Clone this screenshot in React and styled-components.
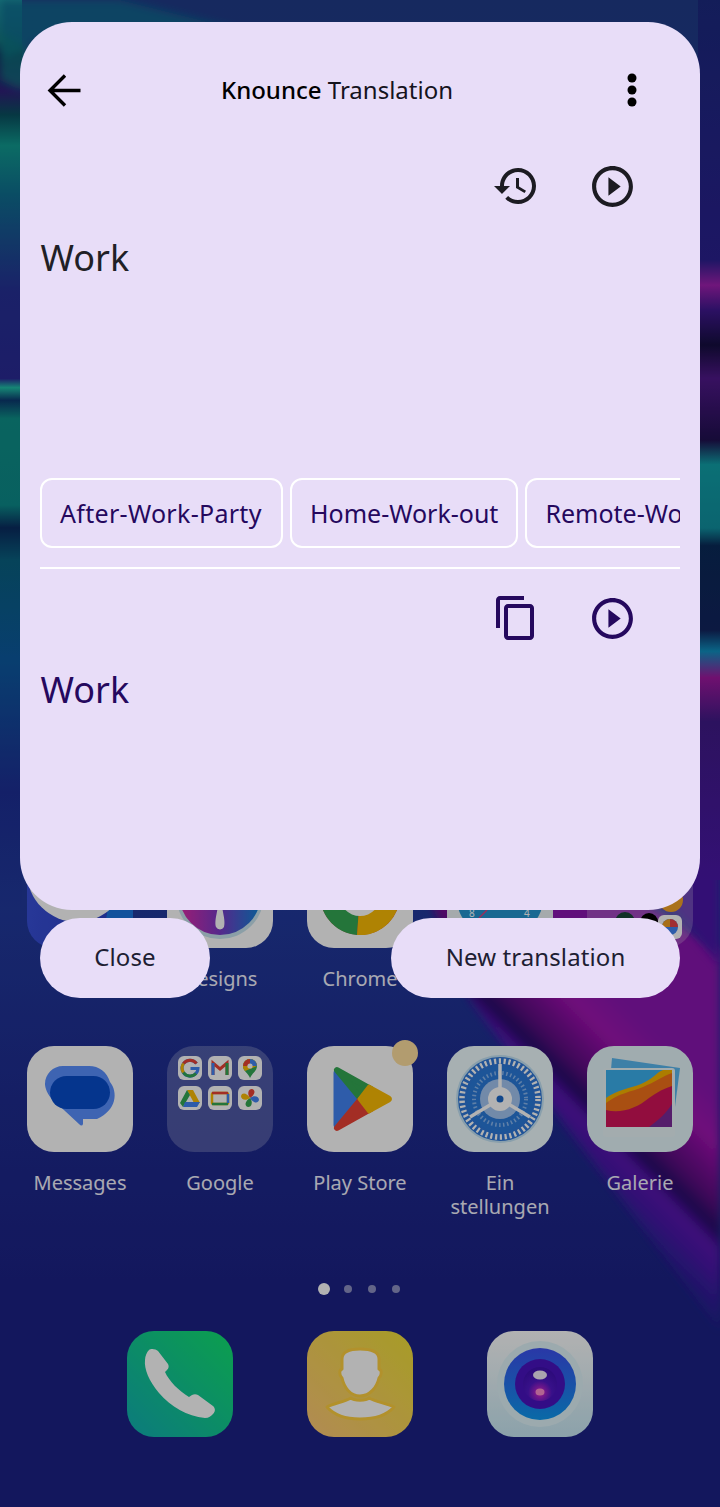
import React from "react";
import styled, { createGlobalStyle } from "styled-components";

const Global = createGlobalStyle`
  html, body { margin: 0; padding: 0; background: #14195e; }
  * { box-sizing: border-box; }
  body { font-family: "Noto Sans", "Open Sans", sans-serif; }
`;

const Screen = styled.div`
  position: relative; width: 720px; height: 1507px; overflow: hidden; background: #1c2286;
`;
const WallpaperArt = styled.svg`
  position: absolute; inset: 0; width: 720px; height: 1507px; display: block;
`;
const Home = styled.main`
  position: relative; padding-top: 842px;
`;
const AppGrid = styled.div`
  display: grid; grid-template-columns: repeat(5, 140px); row-gap: 55px; margin-left: 10px;
`;
const AppCell = styled.div`
  display: flex; flex-direction: column; align-items: center;
`;
const AppIcon = styled.div`
  position: relative; width: 106px; height: 106px; border-radius: 27px;
  background: ${p => p.$bg || "#fff"};
  svg { display: block; width: 106px; height: 106px; border-radius: 27px; }
`;
const Badge = styled.span`
  position: absolute; top: -6px; right: -5px; width: 26px; height: 26px; border-radius: 50%;
  background: #ffe0a0;
`;
const AppLabel = styled.div`
  margin-top: 19px; width: 130px; min-height: 24px; text-align: center; font-size: 20px; line-height: 24px;
  color: #f2f2ff;
`;
const Dots = styled.div`
  display: flex; justify-content: center; align-items: center; gap: 16px;
  height: 12px; margin-top: 64px; padding-right: 2px;
`;
const Dot = styled.span`
  width: ${p => (p.$on ? 12 : 8)}px; height: ${p => (p.$on ? 12 : 8)}px; border-radius: 50%;
  margin-right: ${p => (p.$on ? -2 : 0)}px;
  background: ${p => (p.$on ? "#fff" : "rgba(255,255,255,.5)")};
`;
const Dock = styled.div`
  display: flex; justify-content: center; gap: 74px; margin-top: 36px;
`;
const Scrim = styled.div`
  position: absolute; inset: 0; background: rgba(0,0,0,.3);
`;
const Overlay = styled.div`
  position: absolute; top: 22px; left: 20px; width: 680px;
  display: flex; flex-direction: column; gap: 8px;
`;
const Panel = styled.section`
  height: 888px; border-radius: 52px; background: #e8ddf8; padding: 44px 20px 0;
`;
const Header = styled.header`
  display: flex; align-items: center; height: 48px; padding-right: 24px;
`;
const IconButton = styled.button`
  width: 48px; height: 48px; padding: 0; border: 0; background: none; flex: none;
  color: ${p => p.$color || "#000"};
  display: flex; align-items: center; justify-content: center;
  svg { display: block; flex: none; fill: currentColor; }
`;
const Title = styled.h1`
  flex: 1; margin: 0; padding: 0 22px 0 0; text-align: center;
  font-size: 24px; line-height: 32px; font-weight: 400; color: #15131d;
  strong { font-weight: 500; color: #000; }
`;
const Toolbar = styled.div`
  display: flex; justify-content: flex-end; gap: 48px; padding-right: 44px;
  margin-top: ${p => p.$top}px;
`;
const BigText = styled.p`
  margin: 24px 0 0 .5px; font-size: 36px; line-height: 48px; height: ${p => p.$h}px;
  color: ${p => p.$color};
`;
const Chips = styled.div`
  display: flex; gap: 7px; overflow: hidden; width: 640px;
`;
const Chip = styled.div`
  flex: none; height: 70px; padding: 0 18px; border: 2px solid #fff; border-radius: 12px;
  min-width: ${p => p.$min || 0}px;
  display: flex; align-items: center;
  font-size: 25px; color: #25085e; white-space: nowrap;
  letter-spacing: ${p => p.$track || 0}px;
`;
const Divider = styled.hr`
  margin: 19px 0 0; border: 0; height: 2px; background: #fff;
`;
const Actions = styled.div`
  display: flex; justify-content: space-between; padding: 0 20px;
`;
const PillButton = styled.button`
  height: 80px; width: ${p => p.$w}px; padding: 0 0 4px; border: 0; border-radius: 40px; background: #e8ddf8;
  font: 400 24px "Noto Sans", sans-serif; letter-spacing: .1px; color: #201d33;
`;

const W = ({ children, ...p }) => <svg viewBox="0 0 106 106" {...p}>{children}</svg>;

const Wallpaper = () => (
  <WallpaperArt viewBox="0 0 720 1507">
    <defs>
      <linearGradient id="base" x1="0" y1="0" x2="0" y2="1507" gradientUnits="userSpaceOnUse">
        <stop offset="0" stopColor="#203c89" />
        <stop offset=".6" stopColor="#213a9d" />
        <stop offset=".73" stopColor="#1f2c90" />
        <stop offset=".85" stopColor="#1c2286" />
        <stop offset="1" stopColor="#1c2286" />
      </linearGradient>
      <linearGradient id="left" x1="0" y1="0" x2="0" y2="1">
        <stop offset="0" stopColor="#18a0a8" />
        <stop offset=".044" stopColor="#0f7a80" />
        <stop offset=".06" stopColor="#0a2c5e" />
        <stop offset=".1" stopColor="#30207a" />
        <stop offset=".126" stopColor="#0a5060" />
        <stop offset=".16" stopColor="#109a90" />
        <stop offset=".214" stopColor="#0f6e90" />
        <stop offset=".32" stopColor="#263096" />
        <stop offset=".416" stopColor="#2a2a96" />
        <stop offset=".426" stopColor="#20c0a8" />
        <stop offset=".44" stopColor="#0c3a70" />
        <stop offset=".46" stopColor="#0e9088" />
        <stop offset=".555" stopColor="#0c8a8a" />
        <stop offset=".58" stopColor="#0a2c60" />
        <stop offset=".615" stopColor="#0a6080" />
        <stop offset=".725" stopColor="#0c5aa0" />
        <stop offset=".87" stopColor="#1e2f96" />
        <stop offset="1" stopColor="#213a9d" />
      </linearGradient>
      <linearGradient id="right" x1="0" y1="0" x2="0" y2="1">
        <stop offset="0" stopColor="#1c2a80" />
        <stop offset=".295" stopColor="#2a2090" />
        <stop offset=".324" stopColor="#a020b0" />
        <stop offset=".352" stopColor="#401890" />
        <stop offset=".392" stopColor="#150e40" />
        <stop offset=".43" stopColor="#50188a" />
        <stop offset=".5" stopColor="#201050" />
        <stop offset=".528" stopColor="#10a0a8" />
        <stop offset=".6" stopColor="#1090a0" />
        <stop offset=".62" stopColor="#0a2a58" />
        <stop offset=".716" stopColor="#12245e" />
        <stop offset=".74" stopColor="#0f90c0" />
        <stop offset=".77" stopColor="#a018a0" />
        <stop offset=".82" stopColor="#401a88" />
        <stop offset="1" stopColor="#4a18a8" />
      </linearGradient>
      <linearGradient id="band" x1="520" y1="1140" x2="640" y2="1020" gradientUnits="userSpaceOnUse">
        <stop offset="0" stopColor="#3a1aa8" stopOpacity="0" />
        <stop offset=".25" stopColor="#4a18a8" />
        <stop offset=".36" stopColor="#5a14b0" />
        <stop offset=".44" stopColor="#240c68" />
        <stop offset=".55" stopColor="#5a0f80" />
        <stop offset=".8" stopColor="#a012b0" />
        <stop offset="1" stopColor="#8a18b0" />
      </linearGradient>
      <filter id="soft" x="-10%" y="-10%" width="120%" height="120%"><feGaussianBlur stdDeviation="4" /></filter>
    </defs>
    <rect width="720" height="1507" fill="url(#base)" />
    <path d="M430 900L640 900L720 950V1330L470 1000Z" fill="url(#band)" filter="url(#soft)" />
    <path d="M630 860H720V965Z" fill="#4a18a8" filter="url(#soft)" />
    <rect x="0" y="0" width="22" height="910" fill="url(#left)" />
    <rect x="698" y="0" width="22" height="880" fill="url(#right)" />
    <g filter="url(#soft)">
      <path d="M0 0H120L240 30H60L0 60Z" fill="#0e6a90" opacity=".8" />
      <path d="M0 30L60 70L20 90L0 80Z" fill="#0f7a80" opacity=".7" />
    </g>
  </WallpaperArt>
);

const MessagesIcon = () => (
  <W>
    <path d="M36 20H62C72 20 80 26 83 36C91 46 90 64 70 73H56V78Q55 81 52 78L24 52C19 46 18 40 18 38C18 28 26 20 36 20Z" fill="#5a90ff" />
    <rect x="23" y="30" width="60" height="33" rx="16.5" fill="#084dcb" />
  </W>
);

const Tile = ({ x, y, children }) => (
  <g transform={`translate(${x} ${y})`}>
    <rect width="24" height="24" rx="6" fill="#fff" />
    {children}
  </g>
);

const GoogleFolder = () => (
  <W>
    <Tile x={11} y={10}>
      <path d="M18.5 7.5A8 8 0 1 0 20 12.5H12.5" fill="none" stroke="#4285f4" strokeWidth="3" />
      <path d="M18.5 7.5A8 8 0 0 0 5.5 7.5" fill="none" stroke="#ea4335" strokeWidth="3" />
      <path d="M5.5 7.5A8 8 0 0 0 5.5 16.500" fill="none" stroke="#fbbc05" strokeWidth="3" />
      <path d="M5.500 16.500A8 8 0 0 0 18 17.500" fill="none" stroke="#34a853" strokeWidth="3" />
    </Tile>
    <Tile x={41} y={10}>
      <path d="M5 19V7L12 13L19 7V19" fill="none" stroke="#ea4335" strokeWidth="3" />
      <path d="M5 19V7" stroke="#4285f4" strokeWidth="3" />
      <path d="M19 19V7" stroke="#34a853" strokeWidth="3" />
    </Tile>
    <Tile x={71} y={10}>
      <path d="M12 3A7 7 0 0 1 19 10C19 15 14 17 12 22C10 17 5 15 5 10A7 7 0 0 1 12 3Z" fill="#34a853" />
      <path d="M12 3A7 7 0 0 1 19 10L7 15C5 13 5 11 5 10A7 7 0 0 1 12 3Z" fill="#fbbc05" />
      <path d="M12 3A7 7 0 0 1 19 10H12Z" fill="#4285f4" />
      <path d="M12 3A7 7 0 0 0 5 10H12Z" fill="#ea4335" />
      <circle cx="12" cy="10" r="2.600" fill="#fff" />
    </Tile>
    <Tile x={11} y={40}>
      <path d="M9 4H15L22 17H16Z" fill="#fbbc05" />
      <path d="M9 4L2 17L5 21L12 9Z" fill="#34a853" />
      <path d="M7 16H22L19 21H5Z" fill="#4285f4" />
    </Tile>
    <Tile x={41} y={40}>
      <rect x="4" y="7" width="16" height="11" rx="1.500" fill="none" stroke="#fbbc05" strokeWidth="2.500" />
      <path d="M4 7H20" stroke="#ea4335" strokeWidth="2.500" />
      <path d="M4 18H20" stroke="#34a853" strokeWidth="2.500" />
      <path d="M20 8V17" stroke="#4285f4" strokeWidth="2.500" />
    </Tile>
    <Tile x={71} y={40}>
      <path d="M12 12C9 8 10 3 14 3C18 4 17 9 12 12Z" fill="#ea4335" />
      <path d="M12 12C16 9 21 10 21 14C20 18 15 17 12 12Z" fill="#4285f4" />
      <path d="M12 12C15 16 14 21 10 21C6 20 7 15 12 12Z" fill="#34a853" />
      <path d="M12 12C8 15 3 14 3 10C4 6 9 7 12 12Z" fill="#fbbc05" />
    </Tile>
  </W>
);

const PlayIcon = () => (
  <W>
    <path d="M30 27L56 53L30 79Z" fill="#4285f4" stroke="#4285f4" strokeWidth="7" strokeLinejoin="round" />
    <path d="M30 24L64 43L54 53Z" fill="#34a853" stroke="#34a853" strokeWidth="6" strokeLinejoin="round" />
    <path d="M30 82L64 63L54 53Z" fill="#ea4335" stroke="#ea4335" strokeWidth="6" strokeLinejoin="round" />
    <path d="M62 40L82 51Q85 53 82 55L62 66L52 53Z" fill="#fbbc05" stroke="#fbbc05" strokeWidth="3" strokeLinejoin="round" />
  </W>
);

const SettingsIcon = () => (
  <W>
    <circle cx="53" cy="53" r="44" fill="#c4e4f6" />
    <circle cx="53" cy="53" r="42" fill="#2f78d8" />
    <circle cx="53" cy="53" r="38" fill="none" stroke="#fff" strokeWidth="5.500" strokeDasharray="2.200 2.600" />
    <circle cx="53" cy="53" r="33.500" fill="#2a7ada" />
    <circle cx="53" cy="53" r="26" fill="none" stroke="#8ab8f0" strokeWidth="4" strokeDasharray="1.500 2.500" />
    <circle cx="53" cy="53" r="20" fill="#a4c6f2" />
    <g stroke="#fff" strokeWidth="3.500">
      <path d="M53 53V18" />
      <path d="M53 53L23 71" />
      <path d="M53 53L83 71" />
    </g>
    <circle cx="53" cy="53" r="12" fill="#fff" />
    <circle cx="53" cy="53" r="3.500" fill="#1b66c8" />
  </W>
);

const GalleryIcon = () => (
  <W>
    <path d="M25 12L93 22L85 84L20 70Z" fill="#5ab8f0" />
    <rect x="16" y="22" width="72" height="69" rx="3" fill="#eaf6fa" />
    <rect x="19" y="24" width="66" height="57" fill="#3cb0ee" />
    <path d="M19 52C30 44 44 42 54 38C66 33 70 26 76 24H85V81H19Z" fill="#f7b400" />
    <path d="M19 57C32 47 44 46 56 41C68 36 76 30 85 27V81H19Z" fill="#f2721a" />
    <path d="M19 64C34 68 50 62 62 52C70 46 78 42 85 40V81H19Z" fill="#d1145a" />
    <path d="M62 81C72 74 80 66 85 58V81Z" fill="#7a2a9a" />
  </W>
);

const PhoneIcon = () => (
  <W>
    <path d="M22 19C24 17 29 18 31 20L41 33C42 35 42 37 40 39L38 41C42 50 52 60 62 66L65 64C67 63 69 63 71 64L86 75C89 78 88 81 86 83C84 85 82 87 78 87C60 85 44 76 32 62C22 50 17 38 18 29C18 25 20 21 22 19Z" fill="#fff" />
  </W>
);

const ContactIcon = () => (
  <W>
    <g stroke="#ffd040" strokeWidth="3" fill="#fff" strokeLinejoin="round">
      <path d="M35 28C35 20 43 18 53 18C63 18 72 20 72 28V38C75 39 75 44 72 47C70 56 63 65 53 65C43 65 37 56 35 47C32 44 32 39 35 38Z" />
      <path d="M20 76C27 72 37 71 44 67C47 70 59 70 62 67C69 71 79 72 87 76C79 85 66 88 53 88C40 88 28 85 20 76Z" />
    </g>
  </W>
);

const CameraIcon = () => (
  <W>
    <defs>
      <linearGradient id="cr" x1="0" x2="0" y1="0" y2="1">
        <stop offset="0" stopColor="#3c50f0" />
        <stop offset="1" stopColor="#0e98f0" />
      </linearGradient>
      <radialGradient id="cp" cx=".5" cy=".75" r=".7">
        <stop offset="0" stopColor="#e028c8" />
        <stop offset=".5" stopColor="#5018c5" />
        <stop offset="1" stopColor="#4010b0" />
      </radialGradient>
    </defs>
    <circle cx="53" cy="53" r="43" fill="#e0f4fa" />
    <circle cx="53" cy="53" r="36" fill="url(#cr)" />
    <circle cx="53" cy="53" r="25" fill="#4a14c0" />
    <circle cx="53" cy="53" r="17" fill="url(#cp)" />
    <ellipse cx="53" cy="44" rx="7" ry="4.500" fill="#f4ecfa" />
    <ellipse cx="53" cy="61" rx="4.500" ry="3.500" fill="#ff90d0" />
  </W>
);

const OperaIcon = () => (
  <W>
    <path d="M82 60L106 60V106H74Z" fill="#1a74e0" />
    <circle cx="50" cy="30" r="50" fill="#fff" />
  </W>
);

const DesignsIcon = () => (
  <W>
    <defs>
      <linearGradient id="dg" x1="0" x2="1" y1="0" y2="0">
        <stop offset="0" stopColor="#e02aa8" />
        <stop offset=".5" stopColor="#7a3ac8" />
        <stop offset="1" stopColor="#0c86d8" />
      </linearGradient>
    </defs>
    <circle cx="53" cy="53" r="44" fill="#c8e4f0" />
    <circle cx="53" cy="52" r="41" fill="url(#dg)" />
    <path d="M53 50C55 70 59 78 57 85A4.500 4.500 0 0 1 49 85C47 78 51 70 53 50Z" fill="#fff" />
  </W>
);

const ChromeIcon = () => (
  <W>
    <circle cx="53" cy="53" r="40" fill="#ea4335" />
    <path d="M50 93A40 40 0 0 1 18 34L53 53Z" fill="#34a853" />
    <path d="M50 93A40 40 0 0 0 88 34L53 53Z" fill="#fbbc05" />
    <circle cx="53" cy="53" r="21" fill="#fff" />
    <circle cx="53" cy="53" r="15" fill="#4285f4" />
  </W>
);

const ClockIcon = () => (
  <W>
    <circle cx="53" cy="53" r="44" fill="#2496d2" />
    <text x="22" y="75" fontSize="10" fill="#fff" fontFamily="Noto Sans, sans-serif">8</text>
    <text x="77" y="75" fontSize="10" fill="#fff" fontFamily="Noto Sans, sans-serif">4</text>
    <path d="M32 76L40 68" stroke="#e04080" strokeWidth="1.500" />
  </W>
);

const ToolsFolder = () => (
  <W>
    <circle cx="38" cy="80" r="10" fill="#1a4a3a" />
    <circle cx="62" cy="80" r="9" fill="#000" />
    <rect x="71" y="73" width="24" height="24" rx="6" fill="#fff" />
    <circle cx="83" cy="85" r="8" fill="#4285f4" />
    <path d="M83 77A8 8 0 0 1 91 85H83Z" fill="#e8434a" />
    <path d="M75 85A8 8 0 0 1 83 77V85Z" fill="#f0a020" />
    <circle cx="84" cy="58" r="12" fill="#f4a428" />
  </W>
);

const apps = [
  { label: "Opera", bg: "linear-gradient(100deg,#3a52dc,#2a3cc0)", icon: <OperaIcon /> },
  { label: "Designs", icon: <DesignsIcon /> },
  { label: "Chrome", icon: <ChromeIcon /> },
  { label: "", bg: "#ecf4f6", icon: <ClockIcon /> },
  { label: "", bg: "rgba(255,255,255,.22)", icon: <ToolsFolder /> },
  { label: "Messages", icon: <MessagesIcon /> },
  { label: "Google", bg: "rgba(255,255,255,.22)", icon: <GoogleFolder /> },
  { label: "Play Store", icon: <PlayIcon />, badge: true },
  { label: <>Ein<br />stellungen</>, bg: "#f0fcff", icon: <SettingsIcon /> },
  { label: "Galerie", bg: "#e6f6fb", icon: <GalleryIcon /> },
];

const HistorySvg = () => (
  <svg width="48" height="48" viewBox="0 0 24 24"><path d="M13 3c-4.97 0-9 4.03-9 9H1l3.89 3.89.07.14L9 12H6c0-3.87 3.13-7 7-7s7 3.13 7 7-3.13 7-7 7c-1.93 0-3.68-.79-4.94-2.06l-1.42 1.42C8.27 19.99 10.51 21 13 21c4.97 0 9-4.03 9-9s-4.03-9-9-9zm-1 5v5l4.28 2.54.72-1.21-3.5-2.08V8H12z" /></svg>
);
const PlayCircleSvg = () => (
  <svg width="49" height="49" viewBox="0 0 24 24"><path d="M12 2C6.48 2 2 6.48 2 12s4.48 10 10 10 10-4.48 10-10S17.52 2 12 2zm0 18c-4.41 0-8-3.59-8-8s3.59-8 8-8 8 3.59 8 8-3.59 8-8 8zm-2-3.5 6-4.500-6-4.500v9z" /></svg>
);
const CopySvg = () => (
  <svg width="48" height="48" viewBox="0 0 24 24"><path d="M16 1H4c-1.100 0-2 .9-2 2v14h2V3h12V1zm3 4H8c-1.100 0-2 .9-2 2v14c0 1.100.9 2 2 2h11c1.100 0 2-.9 2-2V7c0-1.100-.9-2-2-2zm0 16H8V7h11v14z" /></svg>
);
const BackSvg = () => (
  <svg width="48" height="48" viewBox="0 0 48 48"><path d="M40.500 24.500H12M25 9.500L10 24.500L25 39.500" fill="none" stroke="currentColor" strokeWidth="3.400" /></svg>
);
const MoreSvg = () => (
  <svg width="48" height="48" viewBox="0 0 48 48"><circle cx="24" cy="12" r="4.500" /><circle cx="24" cy="24" r="4.500" /><circle cx="24" cy="36" r="4.500" /></svg>
);

export default function App() {
  return (
    <Screen>
      <Global />
      <Wallpaper />
      <Home>
        <AppGrid>
          {apps.map((a, i) => (
            <AppCell key={i}>
              <AppIcon $bg={a.bg}>
                {a.icon}
                {a.badge && <Badge />}
              </AppIcon>
              <AppLabel>{a.label}</AppLabel>
            </AppCell>
          ))}
        </AppGrid>
        <Dots>
          <Dot $on /><Dot /><Dot /><Dot />
        </Dots>
        <Dock>
          <AppIcon $bg="linear-gradient(45deg,#12b0b4,#12e470)"><PhoneIcon /></AppIcon>
          <AppIcon $bg="linear-gradient(45deg,#ffc878,#f0e038)"><ContactIcon /></AppIcon>
          <AppIcon $bg="linear-gradient(#fff,#c8e8f4)"><CameraIcon /></AppIcon>
        </Dock>
      </Home>
      <Scrim />
      <Overlay>
        <Panel>
          <Header>
            <IconButton><BackSvg /></IconButton>
            <Title><strong>Knounce</strong> Translation</Title>
            <IconButton><MoreSvg /></IconButton>
          </Header>
          <Toolbar $top={48}>
            <IconButton $color="#1c1b22"><HistorySvg /></IconButton>
            <IconButton $color="#1c1b22"><PlayCircleSvg /></IconButton>
          </Toolbar>
          <BigText $h={244} $color="#211f26">Work</BigText>
          <Chips>
            <Chip $track={0.3} $min={243}>After-Work-Party</Chip>
            <Chip>Home-Work-out</Chip>
            <Chip>Remote-Work</Chip>
          </Chips>
          <Divider />
          <Toolbar $top={25}>
            <IconButton $color="#25085e"><CopySvg /></IconButton>
            <IconButton $color="#25085e"><PlayCircleSvg /></IconButton>
          </Toolbar>
          <BigText $h={48} $color="#25085e">Work</BigText>
        </Panel>
        <Actions>
          <PillButton $w={170}>Close</PillButton>
          <PillButton $w={289}>New translation</PillButton>
        </Actions>
      </Overlay>
    </Screen>
  );
}
